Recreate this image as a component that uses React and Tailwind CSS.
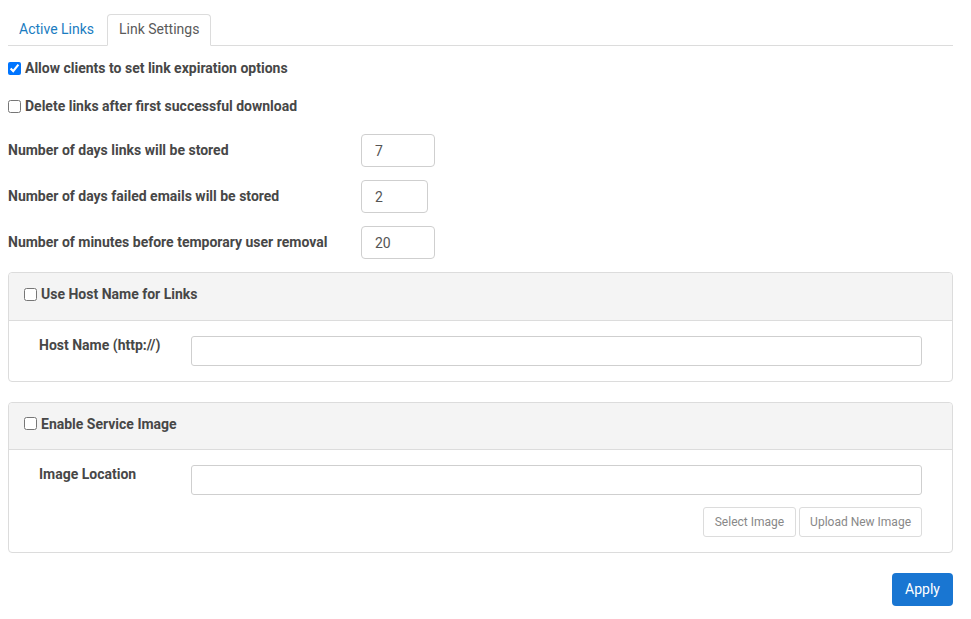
import { useState } from "react";

const Check = ({ checked, onChange, label }) => (
  <label className="flex items-center gap-1 text-sm font-bold text-[#474747] cursor-pointer">
    <input
      type="checkbox"
      checked={checked}
      onChange={onChange}
      className="w-[13px] h-[13px] m-0 accent-[#0075ff]"
    />
    {label}
  </label>
);

const NumberRow = ({ label, value, width }) => (
  <div className="flex items-center h-[33px]">
    <div className="w-[353px] pb-[2px] text-sm font-bold text-[#474747]">{label}</div>
    <input
      defaultValue={value}
      className={`${width} h-[33px] border border-[#cfcfcf] rounded-[4px] px-[13px] text-sm text-[#555] outline-none`}
    />
  </div>
);

const App = () => {
  const [tab, setTab] = useState("settings");
  const [allow, setAllow] = useState(true);
  const [del, setDel] = useState(false);
  const [useHost, setUseHost] = useState(false);
  const [serviceImage, setServiceImage] = useState(false);

  return (
    <div className="pt-[14px] pl-2 pr-[18px] pb-4 font-['Roboto',sans-serif] bg-white">
      {/* tabs */}
      <div className="flex items-end border-b border-[#dcdcdc] h-[32px]">
        <button
          onClick={() => setTab("active")}
          className="h-[31px] px-[11px] pb-[2px] text-sm text-[#1a7cc1] mr-[2px]"
        >
          Active Links
        </button>
        <button
          onClick={() => setTab("settings")}
          className="h-[32px] px-[11px] pb-[2px] -mb-px text-sm text-[#5a5a5a] bg-white border border-[#dcdcdc] border-b-white rounded-t-[4px]"
        >
          Link Settings
        </button>
      </div>

      <div className="flex flex-col">
        <div className="h-[20px] mt-[12px] flex items-center">
          <Check checked={allow} onChange={() => setAllow(!allow)} label="Allow clients to set link expiration options" />
        </div>
        <div className="h-[20px] mt-[18px] flex items-center">
          <Check checked={del} onChange={() => setDel(!del)} label="Delete links after first successful download" />
        </div>

        <div className="flex flex-col gap-[13px] mt-[18px]">
          <NumberRow label="Number of days links will be stored" value="7" width="w-[74px]" />
          <NumberRow label="Number of days failed emails will be stored" value="2" width="w-[67px]" />
          <NumberRow label="Number of minutes before temporary user removal" value="20" width="w-[74px]" />
        </div>

        {/* host name panel */}
        <div className="mt-[13px] border border-[#dcdcdc] rounded-[4px]">
          <div className="h-[48px] bg-[#f4f4f4] border-b border-[#dcdcdc] rounded-t-[4px] flex items-center px-[15px] pb-[5px]">
            <Check checked={useHost} onChange={() => setUseHost(!useHost)} label="Use Host Name for Links" />
          </div>
          <div className="flex pl-[30px] pr-[30px] py-[15px]">
            <div className="w-[152px] text-sm font-bold text-[#474747] leading-[18px]">Host Name (http://)</div>
            <input className="flex-1 h-[30px] border border-[#cfcfcf] rounded-[3px] px-3 text-sm outline-none" />
          </div>
        </div>

        {/* service image panel */}
        <div className="mt-[20px] border border-[#dcdcdc] rounded-[4px]">
          <div className="h-[47px] bg-[#f4f4f4] border-b border-[#dcdcdc] rounded-t-[4px] flex items-center px-[15px] pb-[5px]">
            <Check checked={serviceImage} onChange={() => setServiceImage(!serviceImage)} label="Enable Service Image" />
          </div>
          <div className="flex flex-col pl-[30px] pr-[30px] pt-[15px] pb-[15px]">
            <div className="flex">
              <div className="w-[152px] text-sm font-bold text-[#474747] leading-[18px]">Image Location</div>
              <input className="flex-1 h-[30px] border border-[#cfcfcf] rounded-[3px] px-3 text-sm outline-none" />
            </div>
            <div className="flex justify-end gap-[3px] mt-[12px]">
              <button className="h-[30px] px-[11px] border border-[#dcdcdc] rounded-[3px] text-xs text-[#888]">
                Select Image
              </button>
              <button className="h-[30px] px-[10px] border border-[#dcdcdc] rounded-[3px] text-xs text-[#888]">
                Upload New Image
              </button>
            </div>
          </div>
        </div>

        <div className="flex justify-end mt-[20px]">
          <button className="h-[33px] w-[61px] pb-[2px] bg-[#1976d2] rounded-[4px] text-sm text-white">
            Apply
          </button>
        </div>
      </div>
    </div>
  );
};

export default App;
